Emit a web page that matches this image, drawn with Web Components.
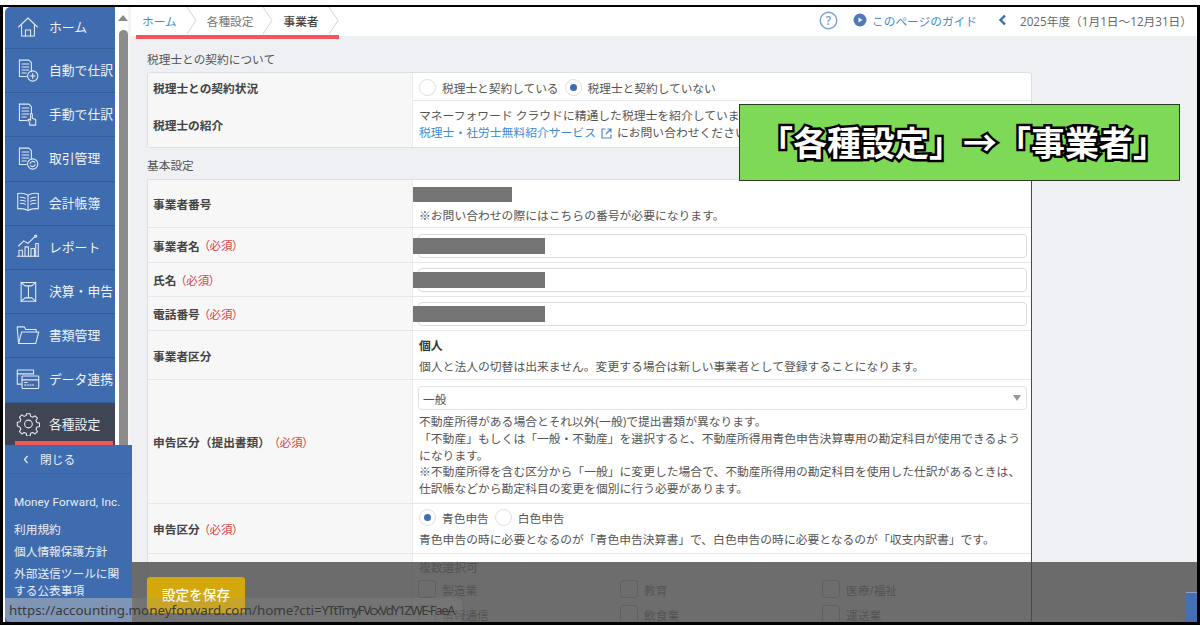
<!DOCTYPE html>
<html lang="ja"><head><meta charset="utf-8"><title>事業者</title>
<style>
html,body{margin:0;padding:0;background:#fff;overflow:hidden}
body{font-family:"Open Sans","Noto Sans CJK JP",sans-serif;font-size:11.7px;color:#444;width:1200px;height:630px}
</style></head><body>
<app-shell>
  <side-nav slot="side">
    <nav-item icon="home" first>ホーム</nav-item>
    <nav-item icon="docplus">自動で仕訳</nav-item>
    <nav-item icon="dochand">手動で仕訳</nav-item>
    <nav-item icon="docsync">取引管理</nav-item>
    <nav-item icon="book">会計帳簿</nav-item>
    <nav-item icon="chart">レポート</nav-item>
    <nav-item icon="box">決算・申告</nav-item>
    <nav-item icon="folder">書類管理</nav-item>
    <nav-item icon="cards">データ連携</nav-item>
    <nav-item icon="gear" active>各種設定</nav-item>
  </side-nav>
  <fake-scrollbar slot="scroll"></fake-scrollbar>
  <top-bar slot="top"></top-bar>
  <main-content slot="main">
    <form-title first>税理士との契約について</form-title>
    <form-table>
      <form-row label="税理士との契約状況" h="28">
        <radio-group><radio-opt>税理士と契約している</radio-opt><radio-opt checked>税理士と契約していない</radio-opt></radio-group>
      </form-row>
      <form-row label="税理士の紹介" h="46" last>
        <note-text style="margin-top:6px">マネーフォワード クラウドに精通した税理士を紹介しています。<br><link-text>税理士・社労士無料紹介サービス</link-text><ext-icon></ext-icon>にお問い合わせください。</note-text>
      </form-row>
    </form-table>
    <form-title>基本設定</form-title>
    <form-table dark>
      <form-row label="事業者番号" h="48">
        <mask-bar w="99" top="7" hh="15"></mask-bar>
        <note-text style="margin-top:27px">※お問い合わせの際にはこちらの番号が必要になります。</note-text>
      </form-row>
      <form-row label="事業者名" required h="35"><text-field style="margin-top:6px"></text-field><mask-bar w="132" top="10"></mask-bar></form-row>
      <form-row label="氏名" required h="34"><text-field></text-field><mask-bar w="132" top="9"></mask-bar></form-row>
      <form-row label="電話番号" required h="34"><text-field></text-field><mask-bar w="132" top="9"></mask-bar></form-row>
      <form-row label="事業者区分" h="49">
        <note-text strong>個人</note-text>
        <note-text style="margin-top:4px">個人と法人の切替は出来ません。変更する場合は新しい事業者として登録することになります。</note-text>
      </form-row>
      <form-row label="申告区分（提出書類）" required h="124">
        <select-field>一般</select-field>
        <note-text style="margin-top:3px;line-height:16.8px">不動産所得がある場合とそれ以外(一般)で提出書類が異なります。<br>「不動産」もしくは「一般・不動産」を選択すると、不動産所得用青色申告決算専用の勘定科目が使用できるようになります。<br>※不動産所得を含む区分から「一般」に変更した場合で、不動産所得用の勘定科目を使用した仕訳があるときは、仕訳帳などから勘定科目の変更を個別に行う必要があります。</note-text>
      </form-row>
      <form-row label="申告区分" required h="50">
        <radio-group style="height:26px"><radio-opt checked>青色申告</radio-opt><radio-opt>白色申告</radio-opt></radio-group>
        <note-text style="margin-top:1px">青色申告の時に必要となるのが「青色申告決算書」で、白色申告の時に必要となるのが「収支内訳書」です。</note-text>
      </form-row>
      <form-row label="" h="90">
        <note-text style="margin-top:5px">複数選択可</note-text>
        <check-grid>
          <check-opt>製造業</check-opt><check-opt>教育</check-opt><check-opt>医療/福祉</check-opt>
          <check-opt>情報通信</check-opt><check-opt>飲食業</check-opt><check-opt>運送業</check-opt>
        </check-grid>
      </form-row>
    </form-table>
  </main-content>
  <close-panel slot="over"></close-panel>
  <save-bar slot="over"></save-bar>
  <callout-box slot="over">「各種設定」→「事業者」</callout-box>
  <url-tip slot="over">https://accounting.moneyforward.com/home?cti=<span style="letter-spacing:-1.62px">YTtTmyFVcxVdY1ZWE-FaeA</span></url-tip>
</app-shell>
<script>
const ICONS={
home:'<path d="M3 14 14 3.5 25 14"/><path d="M6.5 12v12.5h15V12"/><path d="M11 24.5v-7h6v7"/>',
docplus:'<path d="M4 2.5h11l3 3V16"/><path d="M4 2.5v19h8"/><path d="M7 7h8M7 10.5h8M7 14h8M7 17.5h5"/><circle cx="19.5" cy="21" r="6"/><path d="M19.5 18v6M16.5 21h6"/>',
dochand:'<path d="M4 2.5h11l3 3V13"/><path d="M4 2.5v19h9"/><path d="M7 7h8M7 10.5h8M7 14h8M7 17.5h5"/><path d="M16 27v-3l-2-3 1-1 2 1.500V14q1-1.500 2 0v5l4 1.500V27z"/>',
docsync:'<path d="M4 2.5h11l3 3V15"/><path d="M4 2.5v19h8"/><path d="M7 7h8M7 10.5h8M7 14h8M7 17.5h5"/><circle cx="19.500" cy="21" r="6"/><path d="M16.500 20.500a3.200 3.200 0 0 1 5.500-1.500M22.500 21.500a3.200 3.200 0 0 1-5.500 1.500"/>',
book:'<path d="M14 6Q9 3 2 4v18q7-1 12 2 5-3 12-2V4q-7-1-12 2z"/><path d="M14 6v18"/><path d="M5 8.500q3.500 0 6 1M5 12q3.500 0 6 1M5 15.500q3.500 0 6 1M23 8.500q-3.500 0-6 1M23 12q-3.500 0-6 1M23 15.500q-3.500 0-6 1"/>',
chart:'<path d="M1.500 26h25"/><path d="M3.500 26v-7h4v7M10.500 26V15h4v11M17.500 26V17h4v9M23 26V11h3v15"/><path d="M3 14l6-6 5 3 8-8" /><circle cx="23" cy="2.500" r="1.200"/>',
box:'<path d="M6 4h17v22H6z"/><path d="M10.500 8h8M14.500 8v14M10.500 22h8M6 4l4.500 4M23 4l-4.500 4M6 26l4.500-4M23 26l-4.500-4"/>',
folder:'<path d="M3 24 1.500 7V4.500h8l2 3h12v3"/><path d="M3 24h20l3.500-13.500H6.500z"/>',
cards:'<path d="M6 20H1.500V3.500h19V8"/><path d="M1.500 8h19"/><rect x="7" y="10.500" width="19.500" height="14.500" rx="1"/><path d="M7 15h19.500"/><path d="M10 21h1.500M13 21h1.500M16 21h1.500M19 21h1.500" /><path d="M10 18h3"/>',
gear:'<path d="M12 2h4l.6 3.100 2.400 1 2.700-1.700 2.800 2.800-1.700 2.700 1 2.400 3.200.700v4l-3.200.700-1 2.400 1.700 2.700-2.800 2.800-2.700-1.700-2.400 1-.6 3.100h-4l-.6-3.100-2.400-1-2.700 1.700-2.800-2.800 1.700-2.700-1-2.400L1 16v-4l3.200-.700 1-2.400L3.500 6.200l2.800-2.800L9 5.100l2.400-1z" transform="translate(.5 0)"/><circle cx="14.500" cy="14" r="4.500"/>'
};
function def(name,css,html,extra){
  class E extends HTMLElement{
    constructor(){super();this.attachShadow({mode:'open'}).innerHTML='<style>'+css+'</style>'+(typeof html==='function'?html(this):html);}
    connectedCallback(){if(extra)extra(this);}
  }
  customElements.define(name,E);
}
def('app-shell',`
:host{display:block;box-sizing:border-box;position:relative;margin-top:5px;width:1200px;height:620px;background:#fff;
 border-top:2px solid #000;border-left:3px solid #000;border-right:3px solid #000;border-bottom:3px solid #000;overflow:hidden}
.g{display:grid;grid-template-columns:110px 16px 1fr;grid-template-rows:29px 1fr;height:100%;padding-left:2px;box-sizing:border-box}
.side{grid-row:1/3;grid-column:1;min-height:0;overflow:hidden}.sc{grid-row:1/3;grid-column:2;min-height:0}.top{grid-column:3;grid-row:1}.main{grid-column:3;grid-row:2;min-height:0;overflow:hidden;background:#eef0f4}
`,`<div class="g"><div class="side"><slot name="side"></slot></div><div class="sc"><slot name="scroll"></slot></div><div class="top"><slot name="top"></slot></div><div class="main"><slot name="main"></slot></div></div><slot name="over"></slot>`);
def('side-nav',`:host{display:flex;flex-direction:column;background:#3f6cae;height:100%;border-top-left-radius:6px;overflow:hidden}`,`<slot></slot>`);
def('nav-item',`
:host{display:flex;align-items:center;box-sizing:border-box;height:44.200px;flex:none;padding-bottom:2px;color:#eef2f8;font-size:12.800px;background:#3f6cae;border-bottom:1px solid #345c98;position:relative;white-space:nowrap;letter-spacing:0}
:host([first]){height:42px}
:host([active]){background:#3f4552;border-bottom:0;height:42px;padding-bottom:0}
:host([active])::after{content:"";position:absolute;left:10px;right:2px;bottom:0;height:4px;background:#f5565c}
.i{flex:none;width:44px;display:flex;justify-content:center;padding-left:1px;box-sizing:border-box}
svg{width:24px;height:24px;fill:none;stroke:#e4eaf4;stroke-width:1.250;stroke-linejoin:round;stroke-linecap:round}
`,t=>`<span class="i"><svg viewBox="0 0 28 28">${ICONS[t.getAttribute('icon')]}</svg></span><slot></slot>`);
def('fake-scrollbar',`
:host{display:block;height:100%;background:#fff;position:relative}
.a{width:0;height:0;border:5.500px solid transparent;border-top:0;border-bottom:6px solid #8a8a8a;position:absolute;left:3px;top:8px}
.t{position:absolute;left:4px;width:9px;top:23px;bottom:0;background:#8c8c8c;border-radius:5px 5px 0 0}
.r{position:absolute;right:0;top:0;bottom:0;width:3px;background:#f4f4f4}
`,`<div class="r"></div><div class="a"></div><div class="t"></div>`);
def('top-bar',`
:host{display:flex;align-items:center;box-sizing:border-box;height:29px;padding-bottom:3px;background:#fff;position:relative;font-size:11.700px;white-space:nowrap}
.crumbs{display:flex;align-items:center;height:100%;padding-left:11px;position:relative}
.crumbs::after{content:"";position:absolute;left:5px;width:203px;bottom:-6px;height:4px;background:#f5565c}
.c{display:flex;align-items:center;height:100%;color:#777}
.c.h{color:#3d8bd4}.c.b{color:#444;font-weight:500}
svg.ch{width:11px;height:29px;margin:0 10px 0 9px;fill:none;stroke:#cfd3d9;stroke-width:1}
.r{margin-left:auto;display:flex;align-items:center;padding-right:5px}
.g{color:#3d8bd4;margin-left:5px}
.y{color:#666;margin-left:13px}
svg.q{width:19px;height:19px}svg.p{width:14px;height:14px;margin-left:15px}svg.l{width:9px;height:12px;margin-left:21px}
`,`<div class="crumbs"><span class="c h">ホーム</span><svg class="ch" viewBox="0 0 11 29"><path d="M1 1l9 13.500L1 28"/></svg><span class="c">各種設定</span><svg class="ch" viewBox="0 0 11 29"><path d="M1 1l9 13.500L1 28"/></svg><span class="c b">事業者</span><svg class="ch" viewBox="0 0 11 29"><path d="M1 1l9 13.500L1 28"/></svg></div>
<div class="r"><svg class="q" viewBox="0 0 19 19"><circle cx="9.500" cy="9.500" r="8.300" fill="none" stroke="#7d9fce" stroke-width="1.400"/><text x="9.500" y="14" text-anchor="middle" font-size="12" font-weight="600" fill="#7d9fce" font-family="Open Sans">?</text></svg>
<svg class="p" viewBox="0 0 14 14"><circle cx="7" cy="7" r="6.500" fill="#4f79b8"/><path d="M5.500 4.500l4 2.500-4 2.500z" fill="#fff"/></svg><span class="g">このページのガイド</span>
<svg class="l" viewBox="0 0 9 12"><path d="M7 1.500 2.500 6 7 10.500" fill="none" stroke="#3f6cae" stroke-width="2.400"/></svg><span class="y">2025年度（1月1日〜12月31日）</span></div>`);
def('main-content',`:host{display:block;padding:0 0 0 16px;width:885px}`,`<slot></slot>`);
def('form-title',`:host{display:block;color:#555;line-height:17px;margin:9px 0 5px;font-size:11.700px}:host([first]){margin-top:15px;margin-bottom:4px}`,`<slot></slot>`);
def('form-table',`:host{display:block;box-sizing:border-box;width:885px;background:#fff;border:1px solid #dcdfe3;border-radius:3px;overflow:hidden}
:host([dark]){border-right:1px solid #4a4a4a;border-radius:0;border-bottom:0}`,`<slot></slot>`);
def('form-row',`
:host{display:grid;grid-template-columns:265px 1fr;box-sizing:border-box;border-bottom:1px solid #e6e7ea}
:host([last]){border-bottom:0}
.l{background:#f7f7f7;border-right:1px solid #ececec;display:flex;align-items:center;padding-left:5px;font-weight:700;color:#444}
.l b{color:#d9423f;font-weight:400;font-size:11.500px;font-feature-settings:"palt";margin-left:4px}
.v{position:relative;padding:0 4px 0 5px;box-sizing:border-box;min-width:0}
`,t=>`<div class="l">${t.getAttribute('label')}${t.hasAttribute('required')?'<b>（必須）</b>':''}</div><div class="v"><slot></slot></div>`,t=>{t.style.height=t.getAttribute('h')+'px';});
def('radio-group',`:host{display:flex;align-items:center;height:28px;gap:6px;margin-left:1px}`,`<slot></slot>`);
def('radio-opt',`:host{display:inline-flex;align-items:center;gap:6px;color:#555;white-space:nowrap}
i{box-sizing:border-box;width:17px;height:17px;border-radius:50%;border:1px solid #dedede;background:#fff;display:flex;align-items:center;justify-content:center}
i b{width:7px;height:7px;border-radius:50%;background:#3f6cae;display:none}:host([checked]) i b{display:block}`,`<i><b></b></i><slot></slot>`);
def('note-text',`:host{display:block;line-height:17px;color:#555;white-space:normal;font-size:11.800px;margin-left:1px}:host([strong]){font-weight:700;color:#333;margin-top:6px}`,`<slot></slot>`);
def('link-text',`:host{color:#3d8bd4}`,`<slot></slot>`);
def('ext-icon',`:host{display:inline-block;vertical-align:-2px;margin:0 5px}svg{display:block;width:11px;height:11px;fill:none;stroke:#4f86c6;stroke-width:1.200}`,`<svg viewBox="0 0 11 11"><path d="M4.500 1H1v9h9V6.500M6.500 1H10v3.500M10 1 5 6"/></svg>`);
def('mask-bar',`:host{position:absolute;left:0;background:#757575;height:16px;display:block}`,``,t=>{t.style.width=t.getAttribute('w')+'px';t.style.top=t.getAttribute('top')+'px';if(t.hasAttribute('hh'))t.style.height=t.getAttribute('hh')+'px';});
def('text-field',`:host{display:block;box-sizing:border-box;height:24px;margin-top:5px;background:#fff;border:1px solid #dcdcdc;border-radius:4px}`,``);
def('select-field',`:host{display:flex;align-items:center;justify-content:space-between;box-sizing:border-box;height:24px;margin-top:6px;background:#fff;border:1px solid #e2e2e2;border-radius:4px;padding:0 5px 0 4px;color:#555}
i{width:0;height:0;border:4px solid transparent;border-top:6px solid #999;border-bottom:0}`,`<slot></slot><i></i>`);
def('check-grid',`:host{display:grid;grid-template-columns:202px 202px 202px;row-gap:7px;margin-top:4px}`,`<slot></slot>`);
def('check-opt',`:host{display:flex;align-items:center;gap:6px;color:#555;height:18px;white-space:nowrap}i{box-sizing:border-box;width:18px;height:18px;border:1px solid #a8a8a8;border-radius:3px;background:#fff}`,`<i></i><slot></slot>`);
def('close-panel',`
:host{position:absolute;left:2px;top:438px;width:127px;bottom:0;background:#3f6cae;color:#e9eef6;display:flex;flex-direction:column;border-bottom-left-radius:6px;font-size:11.700px;line-height:17px}
.h{height:28px;display:flex;align-items:center;border-bottom:1px solid #3a64a3;padding-left:18px;gap:11px;flex:none}
.h svg{width:6px;height:9px;fill:none;stroke:#e9eef6;stroke-width:1.200}
.b{padding:20px 9px 0 9px;display:flex;flex-direction:column}
.b span{margin-bottom:5px}.b .m{margin-bottom:10px;font-family:Roboto,sans-serif;white-space:nowrap;letter-spacing:.1px}
`,`<div class="h"><svg viewBox="0 0 6 9"><path d="M4.500 1 1.500 4.500 4.500 8"/></svg><span>閉じる</span></div><div class="b"><span class="m">Money Forward, Inc.</span><span>利用規約</span><span>個人情報保護方針</span><span>外部送信ツールに関する公表事項</span></div>`);
def('save-bar',`
:host{position:absolute;left:129px;right:0;top:555px;bottom:0;background:rgba(84,84,84,.85);display:block}
button{position:absolute;left:15px;top:15px;width:98px;height:36px;background:#d4a80c;color:#fff;border:0;border-radius:3px;font:500 13.600px "Open Sans","Noto Sans CJK JP",sans-serif;padding:0 0 2px}
.n{position:absolute;right:0;top:30px;bottom:1px;width:11px;background:#4470b3;border-top:1px solid #8fa3c0}
.v{position:absolute;left:899px;top:0;bottom:0;width:1px;background:#4a4a4a}
`,`<div class="v"></div><button>設定を保存</button><div class="n"></div>`);
def('callout-box',`
:host{position:absolute;left:736px;top:97px;width:441px;height:77px;box-sizing:border-box;padding:0 0 3px 7px;background:#7ed957;border:1px solid #2c3a24;display:flex;align-items:center;justify-content:center;color:#fff;font:700 34px "Noto Sans CJK JP",sans-serif;-webkit-text-stroke:5px #000;paint-order:stroke fill;white-space:nowrap;letter-spacing:0}
`,`<slot></slot>`);
def('url-tip',`
:host{position:absolute;left:2px;bottom:0;width:457px;height:24px;box-sizing:border-box;padding-left:4px;display:flex;align-items:center;border-top-right-radius:5px;border-bottom-left-radius:6px;
background:linear-gradient(90deg,rgba(190,190,190,.5) 127px,rgba(150,150,150,.2) 127px);color:#3a3a3a;font:13.400px "Noto Sans",sans-serif;white-space:nowrap;overflow:hidden}
`,`<slot></slot>`);
</script>
</body></html>
